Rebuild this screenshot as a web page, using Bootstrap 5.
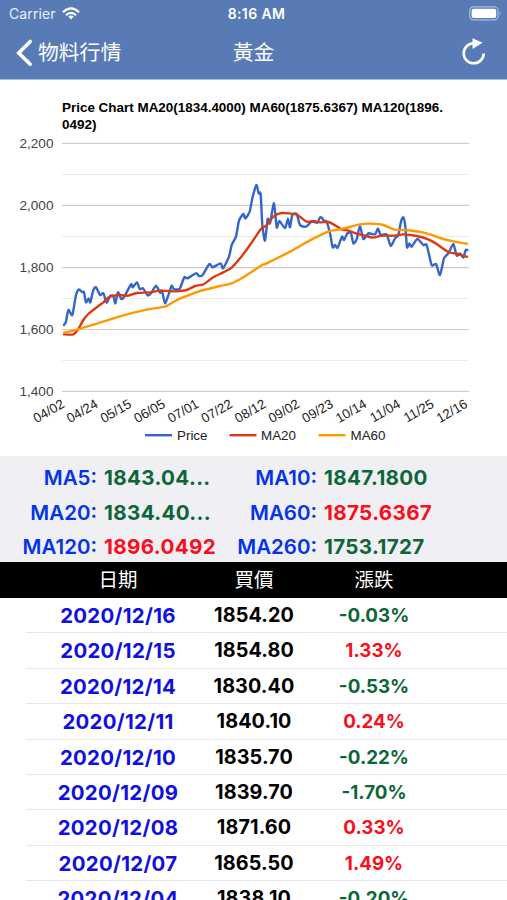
<!DOCTYPE html>
<html lang="zh-Hant">
<head>
<meta charset="utf-8">
<meta name="viewport" content="width=device-width, initial-scale=1">
<title>黃金</title>
<link href="https://cdn.jsdelivr.net/npm/bootstrap@5.3.0/dist/css/bootstrap.min.css" rel="stylesheet">
<style>
body{font-family:Inter,"Noto Sans CJK TC",sans-serif;height:900px;overflow:hidden;background:#fff;color:#000}
.topbar{height:80px;background:#587bb6;color:#fff;border-bottom:1px solid #a9b9d8}
.status-row{height:27px;padding:0 5px 0 9px;font-size:14px;line-height:28px}
.status-row svg,.title-row svg{display:block}
.title-row{height:52px;font-size:20.8px;line-height:50px}
.side{flex:1 1 0}
.reload{margin-right:16px}
.clock{font-weight:600;font-size:14px;letter-spacing:.4px;padding-left:2px}
.carrier{color:#e8eefa;letter-spacing:.1px}
.chart{display:block;font-family:"Liberation Sans",Arial,sans-serif}
.averages{height:106px;background:#efeff4;padding-top:5px;font-size:20.4px;font-weight:600;line-height:34.6px}
.averages .pair{display:grid;column-gap:7px;height:34.6px}
.pair-l{width:220px;grid-template-columns:97px 1fr}
.pair-r{width:287px;grid-template-columns:97px 1fr}
.pair span:first-child{text-align:right;color:#0433e8;font-size:20.5px}
.pair span:last-child{font-size:20.6px;font-weight:650;letter-spacing:.35px}
.down{color:#0d6638}
.up{color:#fb0d1b}
.quote{display:grid;grid-template-columns:184px 88px 152px;column-gap:0;text-align:center;padding-left:26px}
.quote>*{white-space:nowrap}
.quote-head{height:36px;background:#000;color:#fff;font-size:19.5px;line-height:36px}
.quote-row{height:35.4px;line-height:35px;font-size:18.8px;font-weight:650;background:linear-gradient(#e7e7e9,#e7e7e9) 26px 100%/100% 1px no-repeat}
.cost{font-size:19.8px;letter-spacing:.1px}
.day{color:#1010e0;font-size:20.4px;letter-spacing:.3px}
</style>
<script src="https://cdn.jsdelivr.net/npm/bootstrap@5.3.0/dist/js/bootstrap.bundle.min.js"></script>
</head>
<body>
<header class="topbar">
  <div class="status-row d-flex align-items-center">
    <div class="side d-flex align-items-center gap-2"><span class="carrier">Carrier</span>
      <svg width="18" height="13" viewBox="0 0 18 13" style="margin-left:-2px"><g fill="none" stroke="#fff" stroke-width="2.1"><path d="M1 5.2Q9-2.5 17 5.2"/><path d="M4 8.2Q9 3.5 14 8.2"/></g><path d="M6.3 9.5Q9 7.6 11.7 9.5L9 12.4z" fill="#fff"/></svg>
    </div>
    <span class="clock">8:16 AM</span>
    <div class="side d-flex justify-content-end"><svg width="33" height="15" viewBox="0 0 33 15"><rect x=".7" y=".9" width="28.4" height="13" rx="3.8" fill="none" stroke="#a9bbdc" stroke-width="1.2"/><rect x="2.600" y="2.800" width="24.600" height="9.200" rx="2" fill="#fff"/><path d="M30.700 5.200q2 2.200 0 4.400z" fill="#a9bbdc"/></svg></div>
  </div>
  <div class="title-row d-flex align-items-center">
    <div class="side d-flex align-items-center"><svg width="38" height="30" viewBox="0 0 38 30"><path d="M30.200 3.500 18.700 15l11.500 11.200" fill="none" stroke="#fff" stroke-width="3.600" stroke-linecap="round"/></svg><span>物料行情</span></div>
    <span>黃金</span>
    <div class="side d-flex justify-content-end"><svg class="reload" width="40" height="30" viewBox="0 0 40 30"><path d="M22.700 5.300A10 10 0 1 0 32.700 15.500" fill="none" stroke="#fff" stroke-width="2.600"/><path d="M21.500.2V11L31.500 4.800z" fill="#fff"/></svg></div>
  </div>
</header>
<svg class="chart" id="chart" width="507" height="376" viewBox="0 80 507 376">
  <g font-size="13.400" font-weight="700" fill="#000"><text x="62" y="112" textLength="381" lengthAdjust="spacingAndGlyphs">Price Chart MA20(1834.4000) MA60(1875.6367) MA120(1896.</text><text x="62" y="129" textLength="34.500" lengthAdjust="spacingAndGlyphs">0492)</text></g>
  <g stroke="#ebebeb"><path d="M62 174.500H469M62 236.500H469M62 298.500H469M62 360.500H469"/></g>
  <g stroke="#ccc" stroke-width="1.200"><path d="M62 143.300H469M62 205.400H469M62 267.600H469M62 329.500H469M62 391.300H469"/></g>
  <g font-size="13.600" fill="#444" text-anchor="end"><text x="53.500" y="148">2,200</text><text x="53.500" y="210">2,000</text><text x="53.500" y="272">1,800</text><text x="53.500" y="334">1,600</text><text x="53.500" y="396">1,400</text></g>
  <g id="days" font-size="13.300" fill="#222" text-anchor="end"></g>
  <g id="lines" fill="none" stroke-width="2.400" stroke-linejoin="round" stroke-linecap="round"></g>
  <g stroke-width="2.400"><path d="M145 435.200h27" stroke="#3366cc"/><path d="M229.500 435.200h27" stroke="#dc3912"/><path d="M318.500 435.200h27" stroke="#ff9900"/></g>
  <g font-size="13.600" fill="#222"><text x="177" y="440.300" textLength="30.500" lengthAdjust="spacingAndGlyphs">Price</text><text x="261" y="440.300" textLength="35" lengthAdjust="spacingAndGlyphs">MA20</text><text x="350.500" y="440.300" textLength="35" lengthAdjust="spacingAndGlyphs">MA60</text></g>
</svg>
<section class="averages">
  <div class="d-flex"><div class="pair pair-l"><span>MA5:</span><span class="down">1843.04...</span></div><div class="pair pair-r"><span>MA10:</span><span class="down">1847.1800</span></div></div>
  <div class="d-flex"><div class="pair pair-l"><span>MA20:</span><span class="down">1834.40...</span></div><div class="pair pair-r"><span>MA60:</span><span class="up">1875.6367</span></div></div>
  <div class="d-flex"><div class="pair pair-l"><span>MA120:</span><span class="up">1896.0492</span></div><div class="pair pair-r"><span>MA260:</span><span class="down">1753.1727</span></div></div>
</section>
<main>
  <div class="quote quote-head"><span>日期</span><span>買價</span><span>漲跌</span></div>
  <div class="quote quote-row"><span class="day">2020/12/16</span><span class="cost">1854.20</span><span class="down">-0.03%</span></div>
  <div class="quote quote-row"><span class="day">2020/12/15</span><span class="cost">1854.80</span><span class="up">1.33%</span></div>
  <div class="quote quote-row"><span class="day">2020/12/14</span><span class="cost">1830.40</span><span class="down">-0.53%</span></div>
  <div class="quote quote-row"><span class="day">2020/12/11</span><span class="cost">1840.10</span><span class="up">0.24%</span></div>
  <div class="quote quote-row"><span class="day">2020/12/10</span><span class="cost">1835.70</span><span class="down">-0.22%</span></div>
  <div class="quote quote-row"><span class="day">2020/12/09</span><span class="cost">1839.70</span><span class="down">-1.70%</span></div>
  <div class="quote quote-row"><span class="day">2020/12/08</span><span class="cost">1871.60</span><span class="up">0.33%</span></div>
  <div class="quote quote-row"><span class="day">2020/12/07</span><span class="cost">1865.50</span><span class="up">1.49%</span></div>
  <div class="quote quote-row"><span class="day">2020/12/04</span><span class="cost">1838.10</span><span class="down">-0.20%</span></div>
</main>
<script>
const NS='http://www.w3.org/2000/svg';
['04/02','04/24','05/15','06/05','07/01','07/22','08/12','09/02','09/23','10/14','11/04','11/25','12/16'].forEach((d,i)=>{
  const t=document.createElementNS(NS,'text');
  t.textContent=d;
  t.setAttribute('transform',`translate(${65.3+i*33.6} 406.500) rotate(-30)`);
  document.getElementById('days').append(t);
});
// Each series is stored in thirds of a pixel, in three sections with their own origin.
const origins=[[40,260],[180,170],[320,190]];
const series=[
 ['#3366cc',
  '72,195 78,185 85,150 97,165 108,105 117,88 126,96 132,97 138,127 146,115 151,127 160,90 168,82 180,105 190,100 200,128 210,108 220,108 226,130 234,97 244,117 254,108 273,73 278,82 291,67 299,87 309,85 323,106 333,100 348,77 360,98 366,92 375,130 387,100 395,77 401,87 415,88',
  '0,355 13,322 22,325 48,310 57,318 68,315 88,282 98,292 122,280 129,295 147,260 155,225 168,200 177,152 190,132 196,145 209,125 217,85 229,45 236,70 242,72 247,165 255,212 263,147 270,160 282,100 290,172 298,153 315,174 324,147 330,172 337,135 350,132 360,165 378,170 395,155 412,158',
  '0,82 7,85 12,93 20,95 30,130 38,172 45,165 53,173 66,140 72,150 82,130 93,130 100,160 110,148 120,108 130,147 145,130 165,133 174,115 182,135 200,133 212,168 225,145 235,135 243,95 250,82 256,110 261,172 268,160 275,170 292,147 310,165 320,165 335,225 348,222 360,255 372,205 385,190 400,162 410,197 420,190 430,203 437,180 442,180'],
 ['#dc3912',
  '72,223 100,223 115,207 130,180 145,162 170,142 190,127 210,110 240,105 265,107 290,99 330,97 360,92 400,94',
  '0,363 20,360 45,348 70,343 100,322 130,307 155,293 180,265 210,225 243,177 260,166 280,140 305,129 350,134 380,155 400,153',
  '0,97 25,96 40,103 65,118 85,122 110,131 135,137 160,143 185,137 220,137 250,133 290,138 325,148 350,162 385,186 415,192 430,198 441,200'],
 ['#ff9900',
  '72,218 100,212 160,194 240,169 320,149 375,140 400,126',
  '0,386 60,363 120,348 155,340 190,322 243,287 260,280 330,245 390,211',
  '0,136 30,123 65,117 120,103 150,101 190,105 225,119 260,120 320,130 360,144 400,154 441,161']
];
for(const [color,...parts] of series){
  const p=parts.flatMap((s,k)=>s.split(' ').map(q=>q.split(',').map((v,j)=>origins[k][j]+v/3)));
  let d='M'+p[0];
  for(let i=1;i<p.length;i++){
    const a=p[i-2]||p[i-1],b=p[i-1],c=p[i],e=p[i+1]||c,f=.11;
    d+=`C${b[0]+(c[0]-a[0])*f},${b[1]+(c[1]-a[1])*f} ${c[0]-(e[0]-b[0])*f},${c[1]-(e[1]-b[1])*f} ${c}`;
  }
  const path=document.createElementNS(NS,'path');
  path.setAttribute('d',d);
  path.setAttribute('stroke',color);
  document.getElementById('lines').append(path);
}
</script>
</body>
</html>
